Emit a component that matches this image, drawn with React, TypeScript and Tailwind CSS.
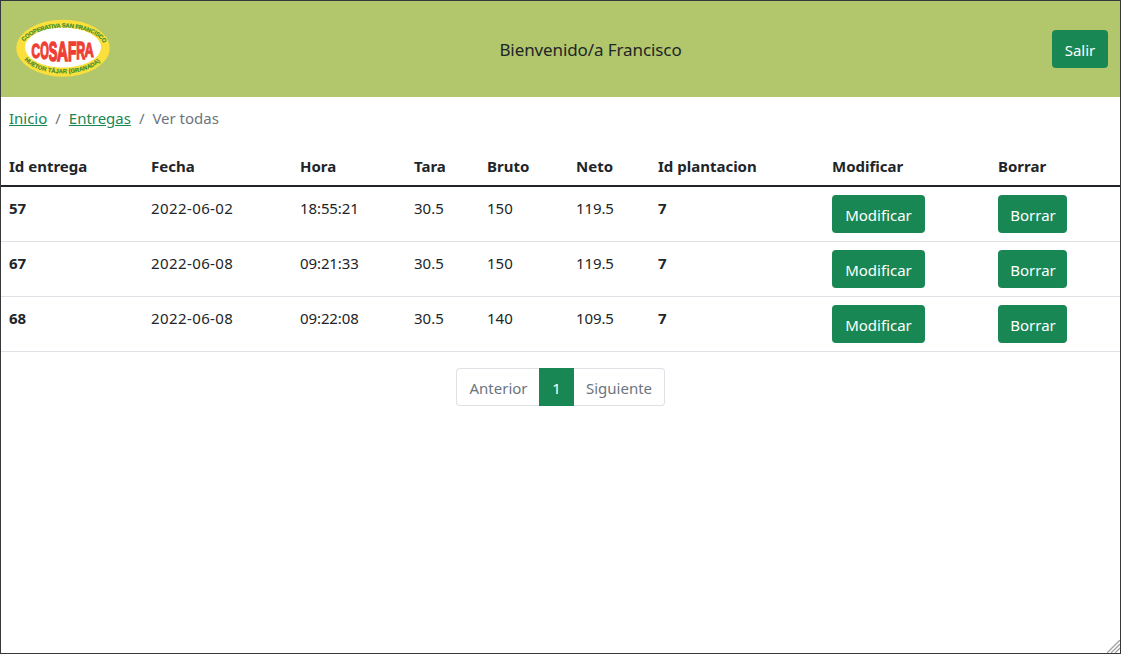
import React from "react";

const COLUMNS = [
  "Id entrega",
  "Fecha",
  "Hora",
  "Tara",
  "Bruto",
  "Neto",
  "Id plantacion",
  "Modificar",
  "Borrar",
];

const ROWS = [
  { id: "57", fecha: "2022-06-02", hora: "18:55:21", tara: "30.5", bruto: "150", neto: "119.5", plantacion: "7" },
  { id: "67", fecha: "2022-06-08", hora: "09:21:33", tara: "30.5", bruto: "150", neto: "119.5", plantacion: "7" },
  { id: "68", fecha: "2022-06-08", hora: "09:22:08", tara: "30.5", bruto: "140", neto: "109.5", plantacion: "7" },
];

// Letters of the emblem: left edge, width, top and bottom of each one.
const LETTERS = [
  { c: "C", x: 94, w: 26, t: 129, b: 174 },
  { c: "O", x: 120, w: 26, t: 126, b: 179 },
  { c: "S", x: 146, w: 26, t: 124, b: 183 },
  { c: "A", x: 171, w: 33, t: 123, b: 185 },
  { c: "F", x: 204, w: 25, t: 124, b: 183 },
  { c: "R", x: 229, w: 27, t: 126, b: 178 },
  { c: "A", x: 254, w: 28, t: 129, b: 173 },
];

function Logo() {
  return (
    <svg viewBox="47 57 284 175" className="mt-[-2px] h-[58px] w-[94px] shrink-0" role="img" aria-label="Cosafra">
      <ellipse cx="189" cy="145" rx="141" ry="86" fill="#fbdf3b" />
      <ellipse cx="189" cy="143" rx="115" ry="60.500" fill="#ffffff" />
      <path id="arc-top" d="M72 126 A 124 61 0 0 1 309 126" fill="none" />
      <path id="arc-bottom" d="M72 180 A 128 69 0 0 0 306 180" fill="none" />
      <g
        fill="#3f8d35"
        stroke="#3f8d35"
        strokeWidth="0.500"
        fontFamily="'Liberation Sans', sans-serif"
        fontWeight="700"
        fontSize="18"
      >
        <text textLength="266" lengthAdjust="spacing">
          <textPath href="#arc-top">COOPERATIVA SAN FRANCISCO</textPath>
        </text>
        <text textLength="248" lengthAdjust="spacing">
          <textPath href="#arc-bottom">HUÉTOR TÁJAR (GRANADA)</textPath>
        </text>
      </g>
      <g fill="#ef3e33" stroke="#ef3e33" strokeWidth="2.200" fontFamily="'Liberation Sans', sans-serif" fontWeight="700">
        {LETTERS.map((l) => (
          <text
            key={l.x}
            fontSize="36"
            textLength="26"
            lengthAdjust="spacingAndGlyphs"
            transform={`translate(${l.x} ${l.b}) scale(${l.w / 26} ${(l.b - l.t) / 26})`}
          >
            {l.c}
          </text>
        ))}
      </g>
    </svg>
  );
}

function Button({ children, className }: { children: React.ReactNode; className: string }) {
  return (
    <button
      type="button"
      className={`flex h-[38px] items-center justify-center rounded bg-[#198754] pt-[2px] text-[15px] text-white ${className}`}
    >
      {children}
    </button>
  );
}

export default function App() {
  return (
    <div className="flex h-[654px] w-[1121px] flex-col overflow-hidden border border-[#37383c] bg-white font-['Noto_Sans',sans-serif] text-[15px] leading-6 text-[#212529]">
      <header className="flex h-24 shrink-0 items-center justify-between bg-[#b2c76b] pr-3 pl-[15px]">
        <Logo />
        <p className="ml-[19px] pt-[2px] text-[17px] tracking-[-0.1px]">Bienvenido/a Francisco</p>
        <Button className="w-14">Salir</Button>
      </header>

      <nav className="flex h-12 shrink-0 gap-2 pt-[9px] pl-2 tracking-[-0.02px] text-[#6c757d]">
        <a href="#inicio" className="text-[#198754] underline">Inicio</a>
        <span>/</span>
        <a href="#entregas" className="text-[#198754] underline">Entregas</a>
        <span>/</span>
        <span>Ver todas</span>
      </nav>

      <table className="w-full table-fixed border-collapse text-left">
        <colgroup>
          <col className="w-[142px]" />
          <col className="w-[149px]" />
          <col className="w-[114px]" />
          <col className="w-[73px]" />
          <col className="w-[89px]" />
          <col className="w-[82px]" />
          <col className="w-[174px]" />
          <col className="w-[166px]" />
          <col />
        </colgroup>
        <thead>
          <tr className="h-[41px] border-b-2 border-[#212529]">
            {COLUMNS.map((c) => (
              <th key={c} className="px-2 pt-[2px] pb-0 font-bold whitespace-nowrap">{c}</th>
            ))}
          </tr>
        </thead>
        <tbody>
          {ROWS.map((r) => (
            <tr key={r.id} className="h-[55px] border-b border-[#dee2e6] align-top">
              <th className="px-2 pt-[9px] font-bold">{r.id}</th>
              <td className="px-2 pt-[9px] tracking-[0.4px]">{r.fecha}</td>
              <td className="px-2 pt-[9px] tracking-[-0.1px]">{r.hora}</td>
              <td className="px-2 pt-[9px]">{r.tara}</td>
              <td className="px-2 pt-[9px]">{r.bruto}</td>
              <td className="px-2 pt-[9px] tracking-[-0.1px]">{r.neto}</td>
              <th className="px-2 pt-[9px] font-bold">{r.plantacion}</th>
              <td className="px-2 pt-2"><Button className="w-[93px]">Modificar</Button></td>
              <td className="px-2 pt-2"><Button className="w-[69px] pl-px">Borrar</Button></td>
            </tr>
          ))}
        </tbody>
      </table>

      <div className="mt-4 flex h-[38px] shrink-0 justify-center text-[#6c757d]">
        <span className="flex w-[83px] items-center justify-center rounded-l border border-r-0 border-[#dee2e6] pt-[2px] pl-px">Anterior</span>
        <span className="flex w-[35px] items-center justify-center bg-[#198754] pt-[2px] text-white">1</span>
        <span className="flex w-[91px] items-center justify-center rounded-r border border-l-0 border-[#dee2e6] pt-[2px]">Siguiente</span>
      </div>

      <svg viewBox="0 0 13 13" className="mt-auto h-[13px] w-[13px] shrink-0 self-end" aria-hidden="true">
        <path d="M0 13 13 0M4 13 13 4M8 13 13 8" stroke="#a0a0a0" strokeWidth="1.300" fill="none" />
      </svg>
    </div>
  );
}
